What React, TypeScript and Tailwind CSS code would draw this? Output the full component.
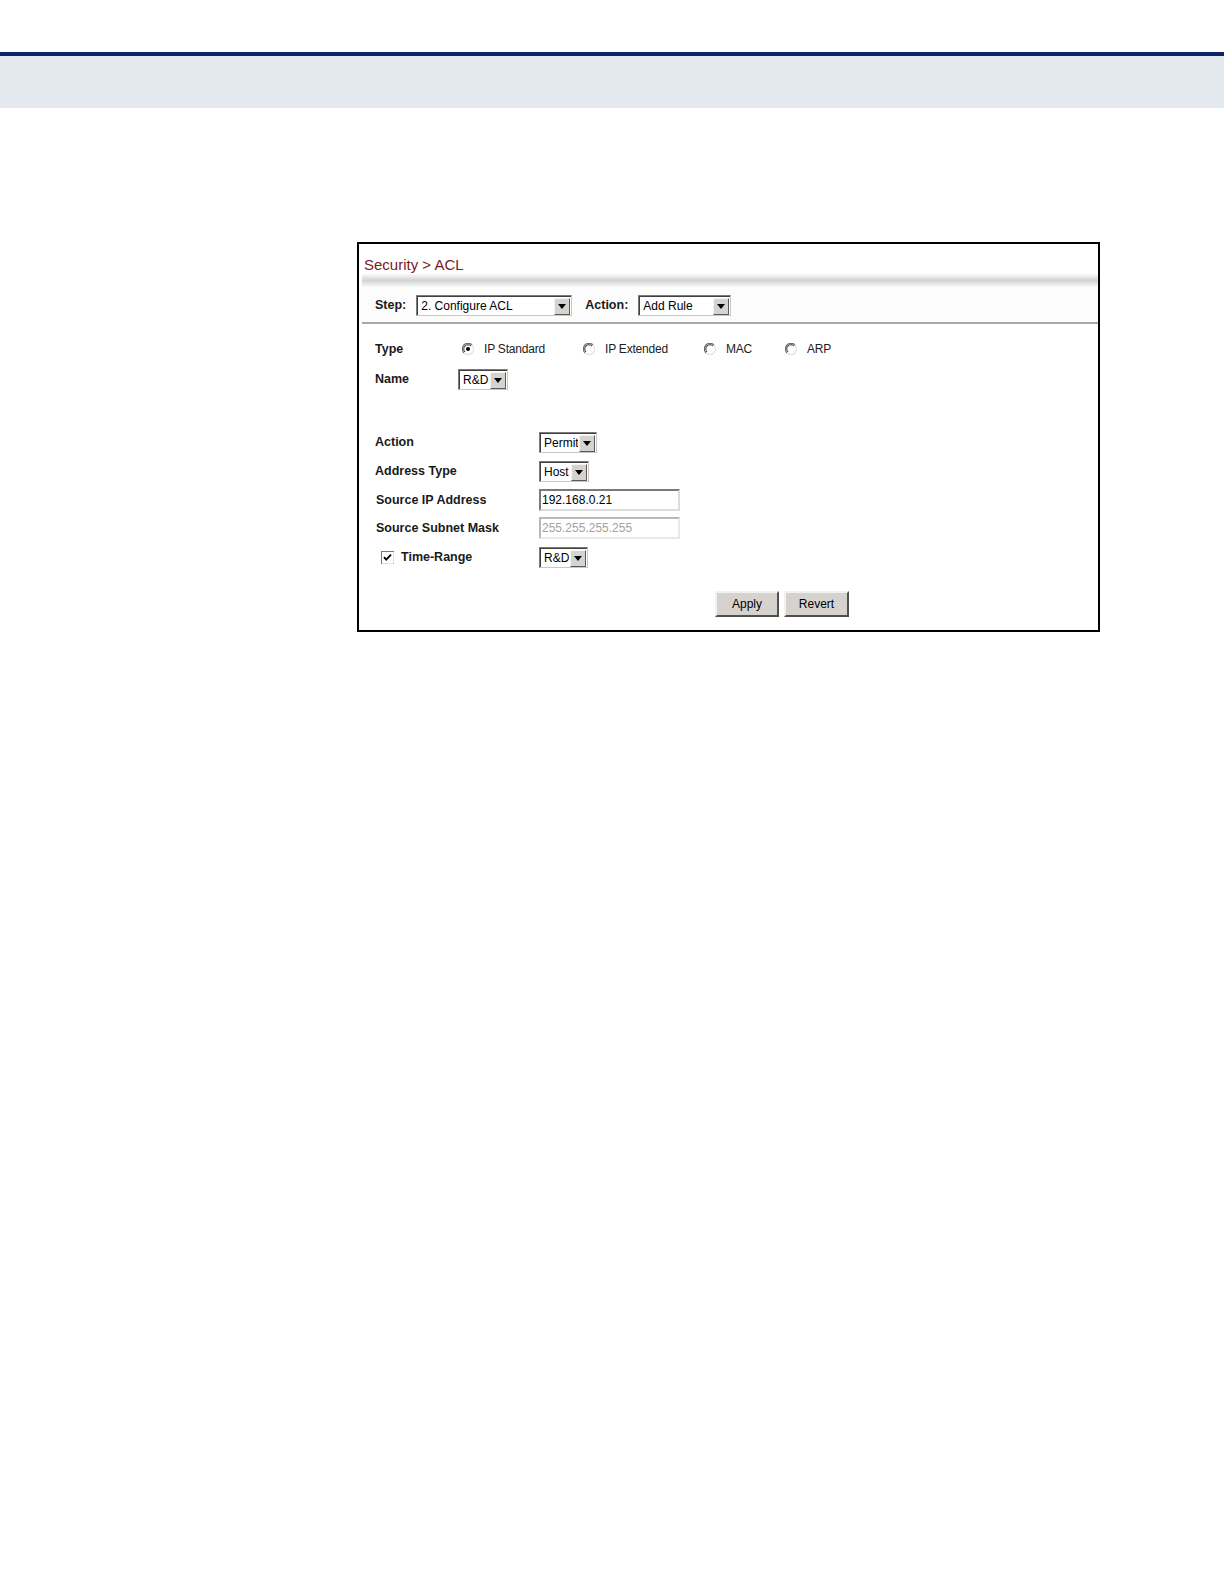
import React from "react";

const font = { fontFamily: '"Liberation Sans", Arial, sans-serif' };

function Select({ value, width }: { value: string; width: string }) {
  return (
    <div
      className={`flex h-[21px] ${width} items-stretch border border-t-[#7a7a7a] border-l-[#7a7a7a] border-r-[#c8c8c8] border-b-[#c8c8c8] bg-white`}
    >
      <div className="flex flex-1 items-center overflow-hidden border-t border-l border-[#404040] pl-[3px] text-[12px] leading-none text-black whitespace-nowrap">
        {value}
      </div>
      <div className="flex w-[18px] items-center justify-center border-t border-[#404040] bg-white pt-[1px]">
        <div className="flex h-[17px] w-[16px] items-center justify-center border border-t-[#f4f4f4] border-l-[#f4f4f4] border-r-[#5a5a5a] border-b-[#5a5a5a] bg-[#d6d3ce]">
          <svg width="8" height="5" viewBox="0 0 8 5">
            <path d="M0 0h8L4 5z" fill="#000" />
          </svg>
        </div>
      </div>
    </div>
  );
}

function Input({ value, disabled }: { value: string; disabled?: boolean }) {
  return (
    <div
      className={`flex h-[22px] w-[141px] items-center border-2 ${
        disabled
          ? "border-t-[#b8b8b8] border-l-[#b8b8b8] border-r-[#e8e8e8] border-b-[#e8e8e8] text-[#a2a2a2]"
          : "border-t-[#7a7a7a] border-l-[#7a7a7a] border-r-[#dcdcdc] border-b-[#dcdcdc] text-black"
      } bg-white pl-[1px] text-[12px] leading-none`}
    >
      {value}
    </div>
  );
}

function Radio({ checked, label, width }: { checked?: boolean; label: string; width: string }) {
  return (
    <div className={`flex items-center ${width}`}>
      <svg width="12" height="12" viewBox="0 0 12 12" className="shrink-0">
        <circle cx="6" cy="6" r="5.5" fill="#fff" />
        <path d="M10 2A5.5 5.5 0 0 0 2 10" fill="none" stroke="#6e6e6e" strokeWidth="1.2" />
        <path d="M2 10A5.5 5.5 0 0 0 10 2" fill="none" stroke="#e2e2e2" strokeWidth="1.2" />
        <path d="M9 3A4.2 4.2 0 0 0 3 9" fill="none" stroke="#303030" strokeWidth="1" />
        {checked && <circle cx="6" cy="6" r="2" fill="#000" />}
      </svg>
      <span className="ml-[10px] text-[12px] tracking-[-0.2px] text-[#222]">{label}</span>
    </div>
  );
}

function Checkbox() {
  return (
    <svg width="13" height="13" viewBox="0 0 13 13" className="shrink-0">
      <rect x="0.5" y="0.5" width="12" height="12" fill="#fff" stroke="#7a7a7a" />
      <path d="M1 12.5h11.5V1" fill="none" stroke="#e0e0e0" />
      <path d="M3 6.2l2.2 2.4L10 3.6" fill="none" stroke="#000" strokeWidth="1.8" />
    </svg>
  );
}

function Button({ label, width }: { label: string; width: string }) {
  return (
    <div
      className={`flex h-[26px] ${width} items-center justify-center border-2 border-t-[#f2f2f2] border-l-[#f2f2f2] border-r-[#505050] border-b-[#505050] bg-[#d6d3ce] text-[12px] text-black`}
    >
      {label}
    </div>
  );
}

function Row({ label, children, mt }: { label: React.ReactNode; children: React.ReactNode; mt: string }) {
  return (
    <div className={`flex h-[22px] items-center ${mt}`}>
      <div className="w-[164px] text-[12.5px] font-bold text-[#1a1a1a]">{label}</div>
      {children}
    </div>
  );
}

export default function App() {
  return (
    <div className="min-h-[1584px] w-full bg-white" style={font}>
      <div className="h-[52px]" />
      <div className="h-[4px] bg-[#0c2461]" />
      <div className="h-[52px] bg-[#e4e8ef]" />

      <div className="ml-[357px] mt-[134px] h-[390px] w-[743px] border-2 border-black bg-white">
        <div className="h-[30px] pl-[5px] pt-[11px] text-[15px] leading-[20px] text-[#7a1a26]">
          Security &gt; ACL
        </div>
        <div className="ml-[3px] h-[13px] bg-gradient-to-b from-[#fbfbfb] via-[#d2d2d2] to-[#fbfbfb]" />
        <div className="flex h-[35px] items-center bg-[#fcfcfc] pl-[16px] pt-[1px]">
          <span className="text-[12.5px] font-bold text-[#1a1a1a]">Step:</span>
          <div className="ml-[10px]">
            <Select value="2. Configure ACL" width="w-[156px]" />
          </div>
          <span className="ml-[13px] text-[12.5px] font-bold text-[#1a1a1a]">Action:</span>
          <div className="ml-[10px]">
            <Select value="Add Rule" width="w-[93px]" />
          </div>
        </div>
        <div className="ml-[3px] h-[2px] bg-[#a8a8a8]" />

        <div className="pl-[16px]">
          <div className="mt-[14px] flex h-[22px] items-center">
            <div className="w-[87px] text-[12.5px] font-bold text-[#1a1a1a]">Type</div>
            <Radio checked label="IP Standard" width="w-[121px]" />
            <Radio label="IP Extended" width="w-[121px]" />
            <Radio label="MAC" width="w-[81px]" />
            <Radio label="ARP" width="w-[60px]" />
          </div>
          <div className="mt-[8px] flex h-[22px] items-center">
            <div className="w-[83px] text-[12.5px] font-bold text-[#1a1a1a]">Name</div>
            <Select value="R&D" width="w-[50px]" />
          </div>

          <Row label="Action" mt="mt-[41px]">
            <Select value="Permit" width="w-[58px]" />
          </Row>
          <Row label="Address Type" mt="mt-[7px]">
            <Select value="Host" width="w-[50px]" />
          </Row>
          <Row label={<span className="pl-[1px]">Source IP Address</span>} mt="mt-[7px]">
            <Input value="192.168.0.21" />
          </Row>
          <Row label={<span className="pl-[1px]">Source Subnet Mask</span>} mt="mt-[6px]">
            <Input value="255.255.255.255" disabled />
          </Row>
          <Row
            label={
              <span className="flex items-center pl-[6px]">
                <Checkbox />
                <span className="ml-[7px]">Time-Range</span>
              </span>
            }
            mt="mt-[7px]"
          >
            <Select value="R&D" width="w-[49px]" />
          </Row>

          <div className="ml-[340px] mt-[23px] flex gap-[5px]">
            <Button label="Apply" width="w-[64px]" />
            <Button label="Revert" width="w-[65px]" />
          </div>
        </div>
      </div>
    </div>
  );
}
